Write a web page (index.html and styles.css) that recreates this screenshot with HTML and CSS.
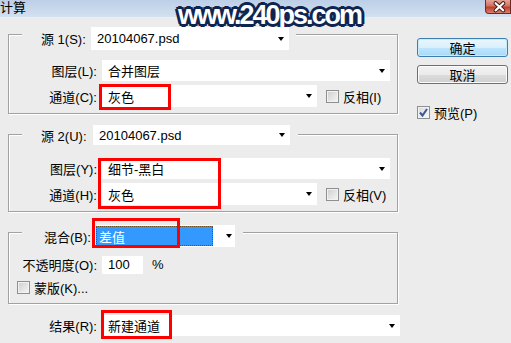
FILE: index.html
```html
<!DOCTYPE html>
<html lang="zh">
<head>
<meta charset="utf-8">
<title>计算</title>
<link rel="stylesheet" href="styles.css">
</head>
<body>
<div class="dialog">
  <div class="titlebar">
    <span class="title">计算</span>
    <div class="close">
      <svg width="26" height="14" viewBox="0 0 26 14"><path d="M11 3 L19 10.5 M19 3 L11 10.5" stroke="#3b1510" stroke-width="4.2" stroke-linecap="round" fill="none"/><path d="M11 3 L19 10.5 M19 3 L11 10.5" stroke="#fff" stroke-width="2.2" stroke-linecap="round" fill="none"/></svg>
    </div>
  </div>
  <div class="watermark">www.240ps.com</div>
  <div class="content">
    <div class="left">
      <div class="group g1">
        <div class="ghead h1">
          <span class="hlabel">源 1(S):</span>
          <div class="select src"><span>20104067.psd</span><span class="arrow"></span></div>
        </div>
        <div class="row r-layer1">
          <span class="lbl">图层(L):</span>
          <div class="select wide"><span>合并图层</span><span class="arrow"></span></div>
        </div>
        <div class="row r-chan1">
          <span class="lbl">通道(C):</span>
          <div class="select chan"><span>灰色</span><span class="arrow"></span><span class="mark m1"></span></div>
          <label class="chk"><span class="cb"></span>反相(I)</label>
        </div>
      </div>

      <div class="group g2">
        <div class="ghead h2">
          <span class="hlabel">源 2(U):</span>
          <div class="select src2"><span>20104067.psd</span><span class="arrow"></span></div>
        </div>
        <div class="rows-wrap">
          <div class="row r-layer2">
            <span class="lbl">图层(Y):</span>
            <div class="select wide"><span>细节-黑白</span><span class="arrow"></span></div>
          </div>
          <div class="row r-chan2">
            <span class="lbl">通道(H):</span>
            <div class="select chan"><span>灰色</span><span class="arrow"></span></div>
            <label class="chk"><span class="cb"></span>反相(V)</label>
          </div>
          <span class="mark m2"></span>
        </div>
      </div>

      <div class="group g3">
        <div class="ghead h3">
          <span class="hlabel">混合(B):</span>
          <div class="select blend"><span class="hl">差值</span><span class="arrow"></span><span class="mark m3"></span></div>
        </div>
        <div class="row r-opacity">
          <span class="lbl">不透明度(O):</span>
          <div class="field">100</div>
          <span class="pct">%</span>
        </div>
        <div class="row r-mask">
          <label class="chk mask"><span class="cb"></span>蒙版(K)...</label>
        </div>
      </div>

      <div class="row r-result">
        <span class="lbl res">结果(R):</span>
        <div class="select result"><span>新建通道</span><span class="arrow"></span><span class="mark m4"></span></div>
      </div>
    </div>

    <div class="right">
      <div class="btn ok">确定</div>
      <div class="btn cancel">取消</div>
      <label class="chk preview"><span class="cb checked"><svg width="11" height="11" viewBox="0 0 11 11"><path d="M2 5.5 L4.5 8.5 L9 2" stroke="#3a5796" stroke-width="2" fill="none"/></svg></span>预览(P)</label>
    </div>
  </div>
</div>
</body>
</html>
```

FILE: styles.css
```css
* { box-sizing: border-box; }

body {
  margin: 0;
  background: #ececec;
  font: 13px "Liberation Sans", "Noto Sans CJK SC", sans-serif;
  color: #000;
}

.dialog {
  position: relative;
  width: 511px;
  height: 343px;
  overflow: hidden;
  background: #ececec;
}

.titlebar {
  height: 17px;
  display: flex;
  justify-content: space-between;
  align-items: flex-start;
  background: linear-gradient(#bccfe7, #d3e1f0);
}

.title {
  line-height: 16px;
  padding-left: 0;
  font-size: 13px;
}

.close {
  width: 26px;
  height: 14px;
  background: linear-gradient(#e3a597 0%, #d4705f 45%, #c13d2b 55%, #d8806b 100%);
  border: 1px solid #6e2b22;
  border-top: none;
  border-bottom-left-radius: 4px;
  display: flex;
}

.close svg { display: block; margin-left: -1px; }

.watermark {
  position: absolute;
  left: 178px;
  top: 2px;
  font: bold 27px/27px "Liberation Sans", sans-serif;
  letter-spacing: -2px;
  color: #fff;
  text-shadow:
    2px 0 #0f2550, -2px 0 #0f2550, 0 2px #0f2550, 0 -2px #0f2550,
    2px 2px #0f2550, -2px -2px #0f2550, 2px -2px #0f2550, -2px 2px #0f2550,
    3px 0 #0f2550, -3px 0 #0f2550, 0 3px #0f2550, 0 -3px #0f2550;
}

.content {
  display: flex;
  padding-left: 8px;
}

.left { width: 392px; }

.right {
  margin-left: 17px;
  width: 91px;
  padding-top: 21px;
}

/* group boxes */
.group {
  width: 390px;
  border: 1px solid #a2a2a2;
  box-shadow: 1px 1px 0 #fff, inset 1px 1px 0 #fff;
}

.g1 { margin-top: 17px; padding-bottom: 6px; }
.g2 { margin-top: 20px; padding-bottom: 6px; }
.g3 { margin-top: 20px; padding-bottom: 9px; }

.ghead {
  display: flex;
  align-items: center;
  width: fit-content;
  background: #ececec;
  margin-left: 13px;
}

.h1 { margin-top: -8px; padding: 0 7px 0 19px; }
.h2 { margin-top: -10px; padding: 0 8px 0 19px; }
.h3 { margin-top: -8px; padding: 0 8px 0 22px; }

.hlabel { width: 50px; white-space: nowrap; }
.h2 .hlabel { width: 52px; }
.h3 .hlabel { width: 52px; }

/* selects */
.select {
  position: relative;
  display: flex;
  align-items: center;
  justify-content: space-between;
  background: #fff;
  padding: 0 5px 0 6px;
  white-space: nowrap;
}

.arrow {
  width: 0;
  height: 0;
  border-top: 4px solid #000;
  border-left: 3.5px solid transparent;
  border-right: 3.5px solid transparent;
}

.src { width: 198px; height: 23px; }
.src2 { width: 197px; height: 20px; }
.wide { width: 288px; height: 21px; }
.chan { width: 215px; height: 22px; }
.result { width: 298px; height: 21px; }

.blend {
  width: 139px;
  height: 22px;
  padding: 1px 3px 1px 0;
}

.hl {
  flex: 0 0 117px;
  height: 20px;
  background: #3399ff;
  color: #fff;
  border: 1px dotted #6a4a20;
  padding-left: 2px;
  display: flex;
  align-items: center;
}

/* rows */
.row {
  display: flex;
  align-items: center;
}

.lbl {
  width: 88px;
  margin-right: 5px;
  text-align: right;
  white-space: nowrap;
}

.lbl.res { width: 89px; }

.r-layer1 { margin-top: 10px; }
.r-chan1 { margin-top: 4px; }

.rows-wrap { position: relative; margin-top: 13px; }
.r-chan2 { margin-top: 4px; }

.r-opacity { margin-top: 8px; }
.r-mask { margin-top: 6px; height: 14px; }
.r-result { margin-top: 11px; }

.field {
  width: 41px;
  height: 18px;
  background: #fff;
  padding-left: 6px;
  display: flex;
  align-items: center;
}

.pct { margin-left: 9px; }

/* checkboxes */
.chk {
  display: flex;
  align-items: center;
  gap: 4px;
  margin-left: 9px;
  white-space: nowrap;
}

.chk.mask { margin-left: 8px; }

.cb {
  width: 13px;
  height: 13px;
  border: 1px solid #8e8f8f;
  background: linear-gradient(135deg, #cdcdcd, #f7f7f7);
  box-shadow: inset 0 0 0 1px #f2f2f2;
  display: flex;
  align-items: center;
  justify-content: center;
}

.cb.checked {
  background: linear-gradient(135deg, #d8d8d8, #fbfbfb);
}

/* red highlight marks */
.mark {
  position: absolute;
  border: 3px solid #f00;
  pointer-events: none;
}

.m1 { left: -3px; top: -1px; width: 72px; height: 26px; }
.m2 { left: 89px; top: 0; width: 123px; height: 51px; }
.m3 { left: -4px; top: -7px; width: 88px; height: 30px; }
.m4 { left: -1px; top: -5px; width: 71px; height: 29px; }

/* buttons */
.btn {
  width: 91px;
  height: 19px;
  border-radius: 3px;
  display: flex;
  align-items: center;
  justify-content: center;
}

.ok {
  border: 1px solid #3c7fb1;
  background: linear-gradient(#eaf6fd 0%, #d9f0fc 50%, #bee6fd 50%, #a7d9f5 100%);
  box-shadow: inset 0 0 0 1px #c4ecfd;
}

.cancel {
  margin-top: 8px;
  border: 1px solid #707070;
  background: linear-gradient(#f2f2f2 0%, #ebebeb 50%, #dddddd 50%, #cfcfcf 100%);
  box-shadow: inset 0 0 0 1px #fbfbfb;
}

.preview {
  margin-left: 0;
  margin-top: 19px;
}
```
